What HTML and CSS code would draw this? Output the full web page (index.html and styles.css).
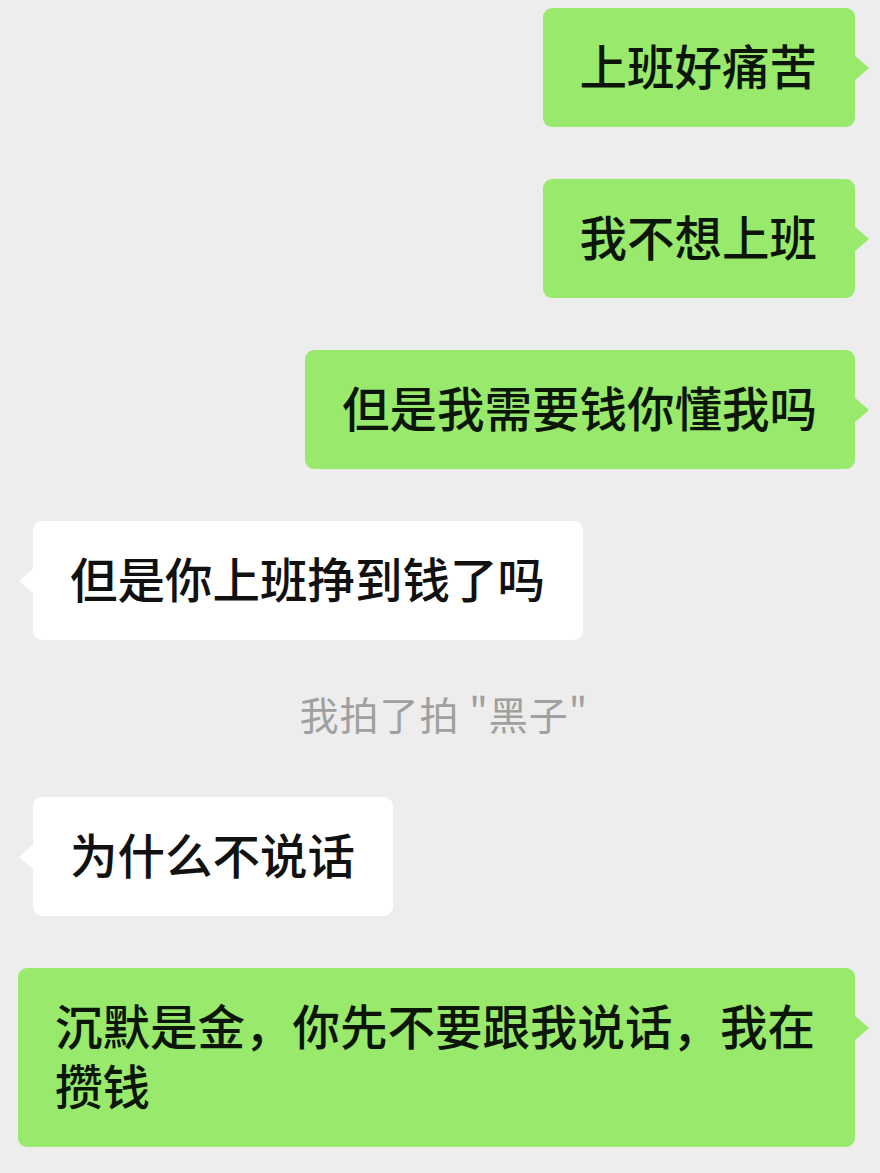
FILE: index.html
```html
<!DOCTYPE html>
<html lang="zh-CN">
<head>
    <meta charset="UTF-8">
    <meta name="viewport" content="width=device-width, initial-scale=1.0">
    <title>聊天</title>
    <link rel="stylesheet" href="styles.css">
</head>
<body>
    <div class="chat">
        <div class="row me">
            <div class="bubble green">上班好痛苦</div>
        </div>
        <div class="row me">
            <div class="bubble green">我不想上班</div>
        </div>
        <div class="row me">
            <div class="bubble green">但是我需要钱你懂我吗</div>
        </div>
        <div class="row other">
            <div class="bubble white">但是你上班挣到钱了吗</div>
        </div>
        <p class="notice">我拍了拍 "黑子"</p>
        <div class="row other">
            <div class="bubble white">为什么不说话</div>
        </div>
        <div class="row me wide">
            <div class="bubble green">沉默是金，你先不要跟我说话，我在攒钱</div>
        </div>
    </div>
</body>
</html>
```

FILE: styles.css
```css
body {
    margin: 0;
    background: #ededed;
    font-family: "Noto Sans CJK SC", "Noto Sans", sans-serif;
}
.chat {
    display: flex;
    flex-direction: column;
    gap: 52px;
    padding: 8px 25px 30px 33px;
}
.row {
    display: flex;
}
.row.me {
    justify-content: flex-end;
}
.row.wide {
    margin-left: -15px;
}
.bubble {
    position: relative;
    padding: 27px 38px 32px 37px;
    font-size: 47.5px;
    line-height: 60px;
    font-weight: 500;
    border-radius: 9px;
    color: #111;
}
.bubble.green {
    background: #98e96c;
    color: #0b1606;
}
.bubble.white {
    background: #fff;
}
.bubble::after {
    content: "";
    position: absolute;
    top: 47px;
    width: 15px;
    height: 26px;
}
.green::after {
    right: -14px;
    background: #98e96c;
    clip-path: polygon(0 0, 100% 50%, 0 100%);
}
.white::after {
    left: -14px;
    background: #fff;
    clip-path: polygon(100% 0, 0 50%, 100% 100%);
}
.notice {
    margin: -4px 0 7px;
    text-align: center;
    font-size: 39px;
    line-height: 50px;
    letter-spacing: 1px;
    color: #a0a0a0;
}
```
